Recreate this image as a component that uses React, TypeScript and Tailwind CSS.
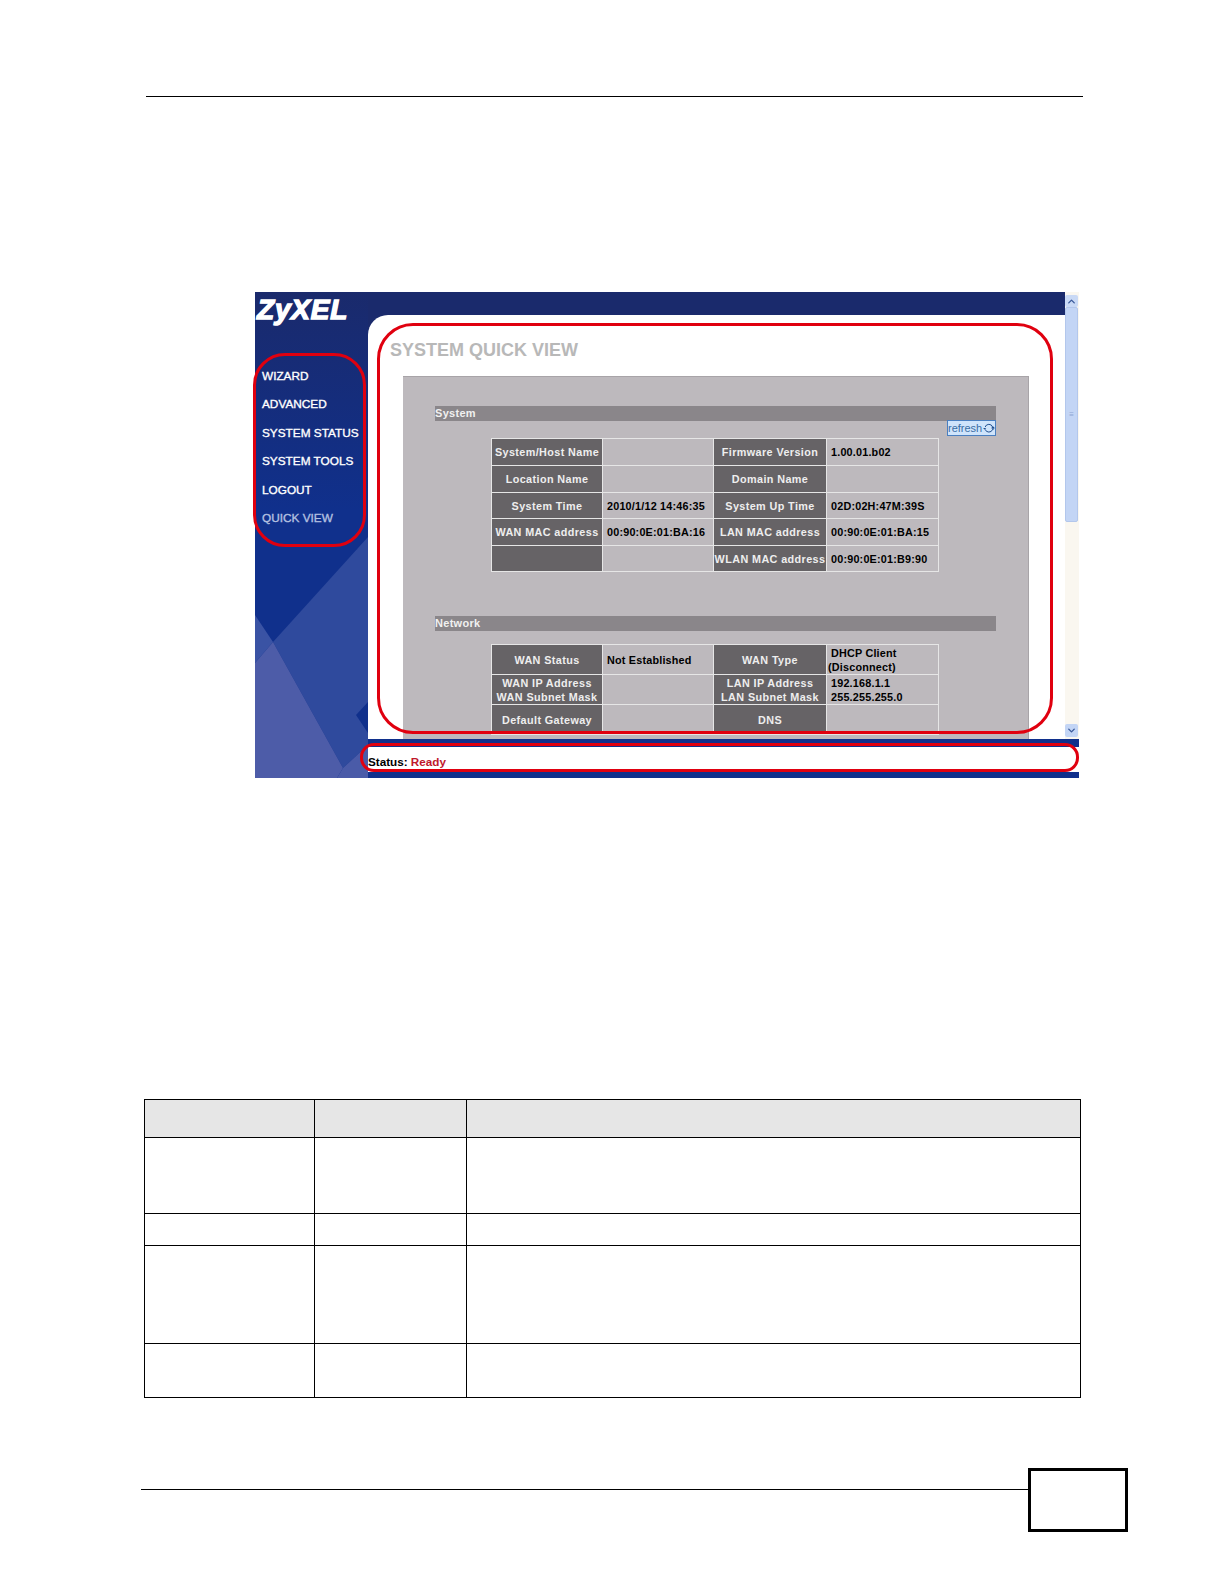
import { ChevronUp, ChevronDown } from 'lucide-react'

const NAV = ['WIZARD', 'ADVANCED', 'SYSTEM STATUS', 'SYSTEM TOOLS', 'LOGOUT']

type Row = { h: string; cells: string[][] }

const SYSTEM_ROWS: Row[] = [
  { h: 'h-[27px]', cells: [['System/Host Name'], [], ['Firmware Version'], ['1.00.01.b02']] },
  { h: 'h-[27px]', cells: [['Location Name'], [], ['Domain Name'], []] },
  { h: 'h-[26px]', cells: [['System Time'], ['2010/1/12 14:46:35'], ['System Up Time'], ['02D:02H:47M:39S']] },
  { h: 'h-[27px]', cells: [['WAN MAC address'], ['00:90:0E:01:BA:16'], ['LAN MAC address'], ['00:90:0E:01:BA:15']] },
  { h: 'h-[26px]', cells: [[], [], ['WLAN MAC address'], ['00:90:0E:01:B9:90']] },
]

const NETWORK_ROWS: Row[] = [
  { h: 'h-[30px]', cells: [['WAN Status'], ['Not Established'], ['WAN Type'], ['DHCP Client', '(Disconnect)']] },
  { h: 'h-[30px]', cells: [['WAN IP Address', 'WAN Subnet Mask'], [], ['LAN IP Address', 'LAN Subnet Mask'], ['192.168.1.1', '255.255.255.0']] },
  { h: 'h-[30px]', cells: [['Default Gateway'], [], ['DNS'], []] },
]

function InfoTable({ rows }: { rows: Row[] }) {
  return (
    <table className="ml-[88px] w-[447px] table-fixed border-collapse text-[10.8px] font-bold leading-[14px]">
      <colgroup>
        <col className="w-[111px]" />
        <col className="w-[111px]" />
        <col className="w-[113px]" />
        <col className="w-[112px]" />
      </colgroup>
      <tbody>
        {rows.map((row, i) => (
          <tr key={i} className={row.h}>
            {row.cells.map((lines, j) =>
              j % 2 === 0 ? (
                <td key={j} className="overflow-hidden whitespace-nowrap border border-[#e6e6e6] bg-[#666366] p-0 text-center tracking-[0.4px] text-[#eeeeee]">
                  {lines.map((l) => (
                    <div key={l}>{l}</div>
                  ))}
                </td>
              ) : (
                <td key={j} className="whitespace-nowrap border border-[#e6e6e6] bg-[#bdb9bd] py-0 pl-[4px] pr-0 tracking-[0.2px] text-black">
                  {lines.map((l) => (
                    <div key={l} className={l.startsWith('(') ? '-ml-[3px]' : ''}>
                      {l}
                    </div>
                  ))}
                </td>
              ),
            )}
          </tr>
        ))}
      </tbody>
    </table>
  )
}

function SectionBar({ label }: { label: string }) {
  return (
    <div className="ml-[32px] flex h-[15px] w-[561px] items-center bg-[#8a868a] text-[11px] font-bold tracking-[0.3px] text-[#f0f0f0]">
      {label}
    </div>
  )
}

function SidebarArt() {
  return (
    <svg className="absolute inset-0 h-full w-full" viewBox="0 0 113 486" preserveAspectRatio="none">
      <defs>
        <linearGradient id="sideFill" x1="0" y1="0" x2="0" y2="1">
          <stop offset="0" stopColor="#1a2a6c" />
          <stop offset="0.45" stopColor="#10308c" />
          <stop offset="1" stopColor="#10308c" />
        </linearGradient>
      </defs>
      <rect width="113" height="486" fill="url(#sideFill)" />
      <polygon points="113,245 18,350 88,476 113,453" fill="#2f4a9d" />
      <polygon points="0,323 18,350 0,371" fill="#3a53a4" />
      <polygon points="18,350 0,371 0,486 82,486 88,476" fill="#4d5ca8" />
      <polygon points="88,476 113,453 113,486 82,486" fill="#4a5ba8" />
      <polygon points="101,423 113,410 113,441" fill="#10308c" />
    </svg>
  )
}

function RefreshGlyph() {
  return (
    <svg viewBox="0 0 12 12" className="h-[12px] w-[12px]" fill="none" stroke="#1f4f8f" strokeWidth="1">
      <path d="M2.2 5 A4 4 0 0 1 9.8 5" />
      <path d="M2.2 7.4 A4 4 0 0 0 9.8 7.4" />
      <path d="M0 6h3.4L1.7 7.6z" fill="#1f4f8f" stroke="none" />
      <path d="M8.4 6H12L10.2 4.2z" fill="#1f4f8f" stroke="none" />
      <path d="M8.4 6.2H12L10.2 8z" fill="#1f4f8f" stroke="none" />
    </svg>
  )
}

export default function App() {
  return (
    <div className="flex h-[1584px] w-[1224px] flex-col bg-white font-['Liberation_Sans',Arial,sans-serif]">
      <div className="ml-[146px] mt-[96px] w-[937px] border-t border-black" />

      <div className="relative ml-[255px] mt-[195px] flex h-[486px] w-[824px] bg-[#1a2a6c]">
        <div className="relative w-[113px] shrink-0">
          <SidebarArt />
          <div className="relative pl-[2px] pt-[2px] text-[28px] font-bold italic leading-[32px] tracking-[0.8px] text-white [-webkit-text-stroke:1.4px_white]">
            ZyXEL
          </div>
          <nav className="relative mt-[42px] flex flex-col gap-[11.4px] pl-[7px] text-[11.8px] leading-[17px] text-white [-webkit-text-stroke:0.35px]">
            {NAV.map((n) => (
              <div key={n}>{n}</div>
            ))}
            <div className="text-[#b4c0e0]">QUICK VIEW</div>
          </nav>
        </div>

        <div className="flex min-w-0 flex-1 flex-col">
          <div className="flex h-[447px]">
            <div className="flex w-[697px] flex-col pt-[23px]">
              <div className="h-[424px] overflow-hidden rounded-tl-[20px] bg-white">
                <div className="pl-[22px] pt-[24px] text-[18px] font-bold leading-[22px] text-[#b8b8b8]">
                  SYSTEM QUICK VIEW
                </div>
                <div className="ml-[35px] mt-[15px] h-[400px] w-[626px] border-r border-t border-[#a8a4a8] bg-[#bdb9bd] pt-[29px]">
                  <SectionBar label="System" />
                  <div className="ml-[32px] flex h-[17px] w-[561px] items-start justify-end">
                    <div className="-mt-[1px] flex h-[16px] w-[49px] items-center justify-center gap-[1px] border border-[#4a7fc0] bg-[#cfe4fb] text-[11px] leading-none text-[#3a6ea5]">
                      refresh
                      <RefreshGlyph />
                    </div>
                  </div>
                  <InfoTable rows={SYSTEM_ROWS} />
                  <div className="h-[44px]" />
                  <SectionBar label="Network" />
                  <div className="h-[13px]" />
                  <InfoTable rows={NETWORK_ROWS} />
                </div>
              </div>
            </div>
            <div className="flex w-[14px] flex-col bg-[#faf7f0] pr-[1px]">
              <div className="mt-[3px] flex h-[12px] items-center justify-center rounded-[2px] bg-[#c9d9f5] text-[#3a5a9a]">
                <ChevronUp size={11} strokeWidth={3} />
              </div>
              <div className="flex h-[215px] items-center justify-center rounded-[2px] border border-[#b3c7ec] bg-[#c3d5f5] text-[8px] leading-[3px] text-[#8ea6d4]">
                ≡
              </div>
              <div className="flex-1" />
              <div className="mb-[2px] flex h-[13px] items-center justify-center rounded-[2px] bg-[#c3d5f5] text-[#3a5a9a]">
                <ChevronDown size={11} strokeWidth={3} />
              </div>
            </div>
          </div>
          <div className="h-[8px] bg-[#10308c]" />
          <div className="flex h-[25px] items-center bg-white pt-[4px] text-[11.7px] font-bold leading-none text-black">
            Status:&nbsp;<span className="text-[#c0182c]">Ready</span>
          </div>
          <div className="h-[6px] bg-[#10308c]" />
        </div>

        <div className="pointer-events-none absolute left-[-2px] top-[61px] h-[194px] w-[113px] rounded-[32px] border-[3px] border-[#e0000f]" />
        <div className="pointer-events-none absolute left-[122px] top-[31px] h-[411px] w-[676px] rounded-[36px] border-[3px] border-[#e0000f]" />
        <div className="pointer-events-none absolute left-[105px] top-[451px] h-[29px] w-[719px] rounded-[14px] border-[3px] border-[#e0000f]" />
      </div>

      <table className="ml-[144px] mt-[321px] w-[937px] table-fixed border-collapse">
        <colgroup>
          <col className="w-[170px]" />
          <col className="w-[152px]" />
          <col />
        </colgroup>
        <tbody>
          <tr className="h-[38px] bg-[#e6e6e6]">
            <td className="border border-black" />
            <td className="border border-black" />
            <td className="border border-black" />
          </tr>
          {['h-[76px]', 'h-[32px]', 'h-[98px]', 'h-[54px]'].map((h) => (
            <tr key={h} className={h}>
              <td className="border border-black" />
              <td className="border border-black" />
              <td className="border border-black" />
            </tr>
          ))}
        </tbody>
      </table>

      <div className="ml-[141px] mt-[70px] flex w-[987px] items-start">
        <div className="mt-[21px] flex-1 border-t border-black" />
        <div className="h-[64px] w-[100px] border-[3px] border-black" />
      </div>
    </div>
  )
}
